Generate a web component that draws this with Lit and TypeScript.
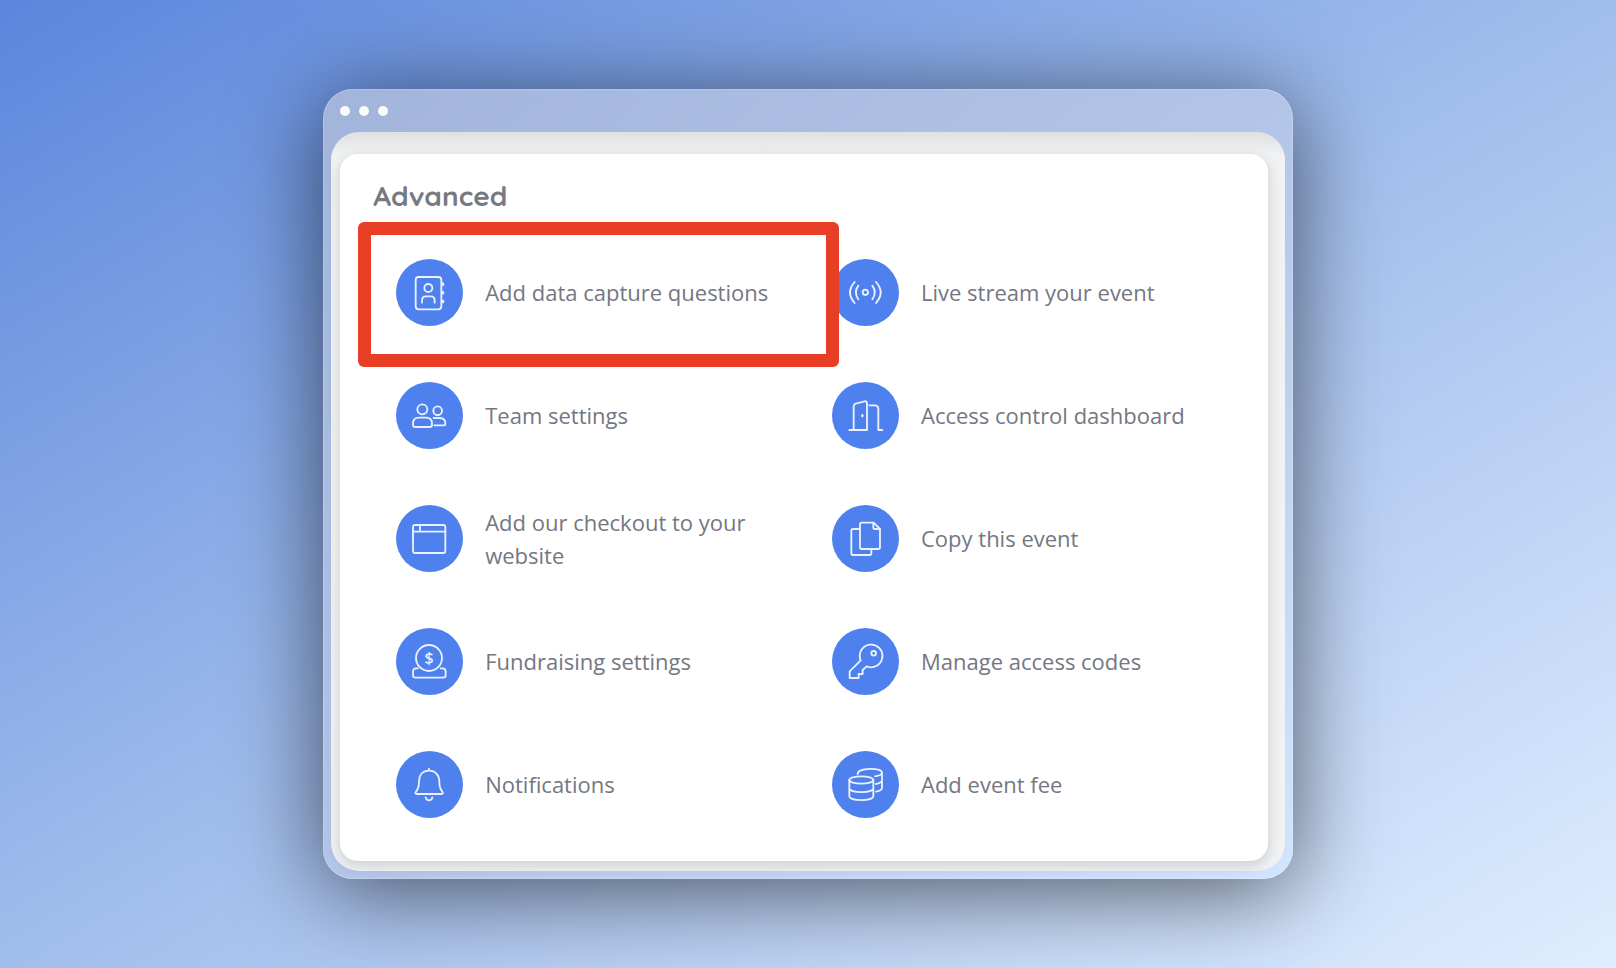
import { LitElement, html, svg, css } from "lit";
import { customElement, property } from "lit/decorators.js";

const icons = {
  contacts: svg`
    <rect x="59" y="54" width="77" height="97" rx="9"/>
    <circle cx="97" cy="87" r="12"/>
    <path d="M78 131v-7q0-12 12-12h14q12 0 12 12v7"/>
    <path class="solid" d="M137 71h7v9h-7zM137 97h7v9h-7zM137 123h7v9h-7z"/>`,
  stream: svg`
    <circle cx="100" cy="100" r="8"/>
    <path d="M79 80Q64 100 79 121M68 69Q40 100 68 132M121 80Q136 100 121 121M132 69Q160 100 132 132"/>`,
  team: svg`
    <circle cx="79" cy="82" r="15"/>
    <path d="M51 128v-3q0-18 18-18h21q18 0 18 18v3q0 7-7 7H58q-7 0-7-7z"/>
    <circle cx="125" cy="86" r="13"/>
    <path d="M113 108h17q18 0 18 16v2q0 4-4 4h-29"/>`,
  door: svg`
    <path d="M52 144h53M65 144V73q0-6 6-8l27-7q7-1 7 6v80M112 70h16q11 0 11 11v63h12"/>
    <ellipse class="solid" cx="91" cy="101" rx="3" ry="5"/>`,
  browser: svg`
    <rect x="51" y="60" width="97" height="84" rx="6"/>
    <path d="M51 80h97M72 60v20"/>`,
  copy: svg`
    <path d="M89 53h36l19 19v55q0 5-5 5H89q-5 0-5-5V58q0-5 5-5z"/>
    <path d="M124 53v15q0 4 4 4h16M83 72H63q-5 0-5 5v68q0 5 5 5h50q5 0 5-5v-12"/>`,
  donate: svg`
    <circle cx="99" cy="90" r="39"/>
    <text x="99" y="107" text-anchor="middle">$</text>
    <path d="M66 121h-5q-10 0-10 10v11q0 7 7 7h84q7 0 7-7v-11q0-10-10-10h-5"/>`,
  key: svg`
    <path d="M86 97L53 130v20h27v-12h12v-12l12-11A34 34 0 1 0 86 97z"/>
    <circle cx="125" cy="76" r="7"/>`,
  bell: svg`
    <path d="M99 59c-20 0-30 14-30 33c0 18-4 24-9 30q-5 7 3 7h73q8 0 3-7c-5-6-9-12-9-30c0-19-11-33-31-33zM99 53v6M89 139q2 9 10 9t10-9"/>`,
  coins: svg`
    <ellipse cx="88" cy="87" rx="36" ry="11"/>
    <path d="M52 87v49c0 15 72 15 72 0V87M52 112c0 15 72 15 72 0"/>
    <path d="M77 69c0-20 73-20 73-4v46q0 7-18 11M150 65q0 8-21 11M150 88q0 7-18 11"/>`,
};

type IconName = keyof typeof icons;

interface Setting {
  label: string;
  icon: IconName;
  highlighted?: boolean;
}

const settings: Setting[] = [
  { label: "Add data capture questions", icon: "contacts", highlighted: true },
  { label: "Live stream your event", icon: "stream" },
  { label: "Team settings", icon: "team" },
  { label: "Access control dashboard", icon: "door" },
  { label: "Add our checkout to your website", icon: "browser" },
  { label: "Copy this event", icon: "copy" },
  { label: "Fundraising settings", icon: "donate" },
  { label: "Manage access codes", icon: "key" },
  { label: "Notifications", icon: "bell" },
  { label: "Add event fee", icon: "coins" },
];

@customElement("setting-link")
export class SettingLink extends LitElement {
  static styles = css`
    :host {
      display: block;
    }
    .link {
      display: flex;
      align-items: center;
      gap: 22px;
      padding-right: 48px;
      color: #747782;
      font: 400 22px/33px "Open Sans", "Noto Sans", sans-serif;
      text-decoration: none;
    }
    .badge {
      flex: none;
      width: 67px;
      height: 67px;
      border-radius: 50%;
      background: #4e80ee;
    }
    .icon {
      display: block;
      width: 100%;
      height: 100%;
      fill: none;
      stroke: #eaf1ff;
      stroke-width: 5.5;
      stroke-linecap: round;
      stroke-linejoin: round;
    }
    .icon .solid {
      fill: #eaf1ff;
      stroke-width: 1;
    }
    .icon text {
      fill: #eaf1ff;
      stroke: none;
      font: 600 48px "Open Sans", sans-serif;
    }
  `;

  @property() label = "";
  @property() icon: IconName = "bell";

  render() {
    return html`
      <a class="link" href="#">
        <span class="badge">
          <svg class="icon" viewBox="0 0 201 201" aria-hidden="true">${icons[this.icon]}</svg>
        </span>
        <span>${this.label}</span>
      </a>
    `;
  }
}

@customElement("app-root")
export class AppRoot extends LitElement {
  static styles = css`
    :host {
      display: flex;
      align-items: center;
      justify-content: center;
      min-height: 100vh;
      box-sizing: border-box;
      padding: 24px 0;
      background: linear-gradient(to bottom right, #5a86dc, #a1bdec 50%, #dfeeff);
    }
    .window {
      box-sizing: border-box;
      width: 60%;
      padding: 0 8px 8px;
      border-radius: 30px;
      background: linear-gradient(to bottom right, #a2b4da, #b2c5e8 50%, #d2e4ff);
      box-shadow:
        inset 0 0 0 1px rgba(255, 255, 255, 0.18),
        0 12px 90px rgba(0, 0, 0, 0.6);
    }
    .titlebar {
      display: flex;
      align-items: center;
      gap: 9px;
      height: 43px;
      padding-left: 9px;
    }
    .dot {
      width: 10px;
      height: 10px;
      border-radius: 50%;
      background: #fafcfb;
    }
    .viewport {
      padding: 22px 17px 10px 9px;
      border-radius: 28px;
      background: linear-gradient(#dfe0e1, #f0f2f3 23px);
    }
    .card {
      padding: 26px 0 43px 33px;
      border-radius: 18px;
      background: #fff;
      box-shadow: 0 4px 14px rgba(0, 0, 0, 0.16);
    }
    .title {
      margin: 0 0 47px;
      color: #777983;
      font: 700 28px/32px Quicksand, Lato, sans-serif;
    }
    .grid {
      display: grid;
      grid-template-columns: 1fr 1fr;
      row-gap: 56px;
      margin: 0;
      padding: 0 0 0 23px;
      list-style: none;
    }
    .highlighted {
      position: relative;
    }
    .highlighted::after {
      content: "";
      position: absolute;
      inset: -37px -7px -41px -38px;
      border: 13px solid #e83e25;
      border-radius: 6px;
      pointer-events: none;
    }
  `;

  render() {
    return html`
      <main class="window">
        <div class="titlebar">
          <span class="dot"></span><span class="dot"></span><span class="dot"></span>
        </div>
        <div class="viewport">
          <section class="card" aria-labelledby="title">
            <h1 class="title" id="title">Advanced</h1>
            <ul class="grid">
              ${settings.map(
                (s) => html`
                  <li class=${s.highlighted ? "highlighted" : "item"}>
                    <setting-link .label=${s.label} .icon=${s.icon}></setting-link>
                  </li>
                `,
              )}
            </ul>
          </section>
        </div>
      </main>
    `;
  }
}
